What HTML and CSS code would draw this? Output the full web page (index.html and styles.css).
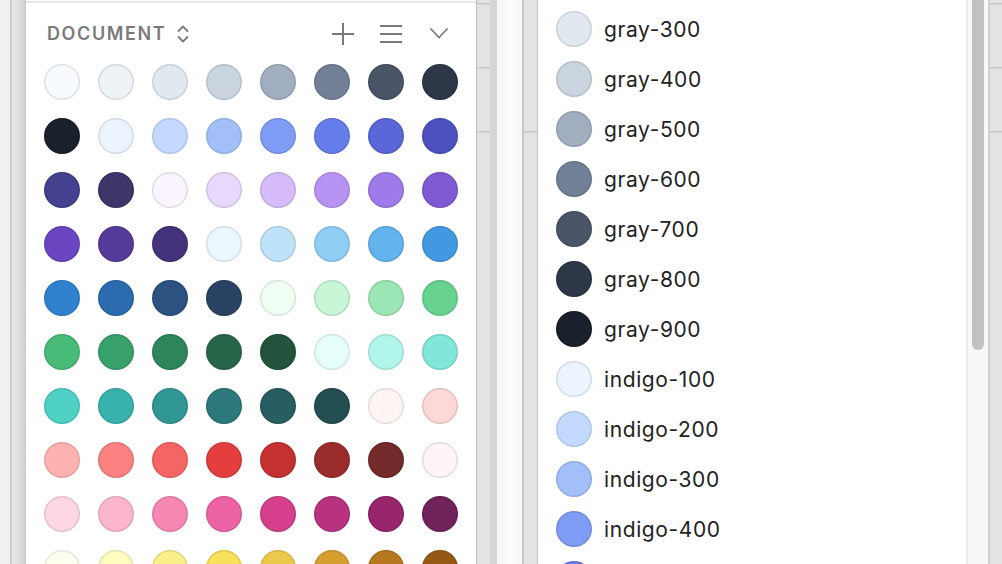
FILE: index.html
```html
<!DOCTYPE html>
<html lang="en">
<head>
<meta charset="utf-8">
<title>Colors</title>
<link rel="stylesheet" href="styles.css">
</head>
<body>
<div class="frame">
  <div class="edge-light"></div>
  <div class="edge-rule"></div>
  <div class="edge-shade"></div>

  <section class="panel panel-doc">
    <header class="doc-header">
      <div class="doc-title">
        <span class="doc-label">DOCUMENT</span>
        <svg class="icon-sort" width="14" height="20" viewBox="0 0 14 20" fill="none" stroke="currentColor" stroke-width="1.8" stroke-linecap="round" stroke-linejoin="round"><path d="M2.5 7 L7 2.5 L11.5 7"/><path d="M2.5 13 L7 17.5 L11.5 13"/></svg>
      </div>
      <div class="doc-actions">
        <svg class="icon" width="24" height="24" viewBox="0 0 24 24" fill="none" stroke="currentColor" stroke-width="2"><path d="M12 1 V23"/><path d="M1 12 H23"/></svg>
        <svg class="icon" width="24" height="24" viewBox="0 0 24 24" fill="none" stroke="currentColor" stroke-width="2"><path d="M1 4 H23"/><path d="M1 12 H23"/><path d="M1 20 H23"/></svg>
        <svg class="icon" width="24" height="24" viewBox="0 0 24 24" fill="none" stroke="currentColor" stroke-width="1.8" stroke-linecap="round" stroke-linejoin="round"><path d="M4 7 L12 15.5 L20 7"/></svg>
      </div>
    </header>
    <div class="swatch-grid">
      <span class="swatch" style="background:#f7fafc"></span>
      <span class="swatch" style="background:#edf2f7"></span>
      <span class="swatch" style="background:#e2e8f0"></span>
      <span class="swatch" style="background:#cbd5e0"></span>
      <span class="swatch" style="background:#a0aec0"></span>
      <span class="swatch" style="background:#718096"></span>
      <span class="swatch" style="background:#4a5568"></span>
      <span class="swatch" style="background:#2d3748"></span>

      <span class="swatch" style="background:#1a202c"></span>
      <span class="swatch" style="background:#ebf4ff"></span>
      <span class="swatch" style="background:#c3dafe"></span>
      <span class="swatch" style="background:#a3bffa"></span>
      <span class="swatch" style="background:#7f9cf5"></span>
      <span class="swatch" style="background:#667eea"></span>
      <span class="swatch" style="background:#5a67d8"></span>
      <span class="swatch" style="background:#4c51bf"></span>

      <span class="swatch" style="background:#434190"></span>
      <span class="swatch" style="background:#3c366b"></span>
      <span class="swatch" style="background:#faf5ff"></span>
      <span class="swatch" style="background:#e9d8fd"></span>
      <span class="swatch" style="background:#d6bcfa"></span>
      <span class="swatch" style="background:#b794f4"></span>
      <span class="swatch" style="background:#9f7aea"></span>
      <span class="swatch" style="background:#805ad5"></span>

      <span class="swatch" style="background:#6b46c1"></span>
      <span class="swatch" style="background:#553c9a"></span>
      <span class="swatch" style="background:#44337a"></span>
      <span class="swatch" style="background:#ebf8ff"></span>
      <span class="swatch" style="background:#bee3f8"></span>
      <span class="swatch" style="background:#90cdf4"></span>
      <span class="swatch" style="background:#63b3ed"></span>
      <span class="swatch" style="background:#4299e1"></span>

      <span class="swatch" style="background:#3182ce"></span>
      <span class="swatch" style="background:#2b6cb0"></span>
      <span class="swatch" style="background:#2c5282"></span>
      <span class="swatch" style="background:#2a4365"></span>
      <span class="swatch" style="background:#f0fff4"></span>
      <span class="swatch" style="background:#c6f6d5"></span>
      <span class="swatch" style="background:#9ae6b4"></span>
      <span class="swatch" style="background:#68d391"></span>

      <span class="swatch" style="background:#48bb78"></span>
      <span class="swatch" style="background:#38a169"></span>
      <span class="swatch" style="background:#2f855a"></span>
      <span class="swatch" style="background:#276749"></span>
      <span class="swatch" style="background:#22543d"></span>
      <span class="swatch" style="background:#e6fffa"></span>
      <span class="swatch" style="background:#b2f5ea"></span>
      <span class="swatch" style="background:#81e6d9"></span>

      <span class="swatch" style="background:#4fd1c5"></span>
      <span class="swatch" style="background:#38b2ac"></span>
      <span class="swatch" style="background:#319795"></span>
      <span class="swatch" style="background:#2c7a7b"></span>
      <span class="swatch" style="background:#285e61"></span>
      <span class="swatch" style="background:#234e52"></span>
      <span class="swatch" style="background:#fff5f5"></span>
      <span class="swatch" style="background:#fed7d7"></span>

      <span class="swatch" style="background:#feb2b2"></span>
      <span class="swatch" style="background:#fc8181"></span>
      <span class="swatch" style="background:#f56565"></span>
      <span class="swatch" style="background:#e53e3e"></span>
      <span class="swatch" style="background:#c53030"></span>
      <span class="swatch" style="background:#9b2c2c"></span>
      <span class="swatch" style="background:#742a2a"></span>
      <span class="swatch" style="background:#fff5f7"></span>

      <span class="swatch" style="background:#fed7e2"></span>
      <span class="swatch" style="background:#fbb6ce"></span>
      <span class="swatch" style="background:#f687b3"></span>
      <span class="swatch" style="background:#ed64a6"></span>
      <span class="swatch" style="background:#d53f8c"></span>
      <span class="swatch" style="background:#b83280"></span>
      <span class="swatch" style="background:#97266d"></span>
      <span class="swatch" style="background:#702459"></span>

      <span class="swatch" style="background:#fffff0"></span>
      <span class="swatch" style="background:#fefcbf"></span>
      <span class="swatch" style="background:#faf089"></span>
      <span class="swatch" style="background:#f6e05e"></span>
      <span class="swatch" style="background:#ecc94b"></span>
      <span class="swatch" style="background:#d69e2e"></span>
      <span class="swatch" style="background:#b7791f"></span>
      <span class="swatch" style="background:#975a16"></span>
    </div>
  </section>

  <div class="gap-border"></div>
  <div class="gap-stripe lines-a"></div>
  <div class="gap-dark"></div>
  <div class="gap-light"></div>
  <div class="gap-rule"></div>
  <div class="gap-stripe lines-b"></div>
  <div class="gap-edge"></div>

  <section class="panel panel-list">
    <ul class="color-list">
      <li class="color-item"><span class="swatch" style="background:#e2e8f0"></span><span class="color-name">gray-300</span></li>
      <li class="color-item"><span class="swatch" style="background:#cbd5e0"></span><span class="color-name">gray-400</span></li>
      <li class="color-item"><span class="swatch" style="background:#a0aec0"></span><span class="color-name">gray-500</span></li>
      <li class="color-item"><span class="swatch" style="background:#718096"></span><span class="color-name">gray-600</span></li>
      <li class="color-item"><span class="swatch" style="background:#4a5568"></span><span class="color-name">gray-700</span></li>
      <li class="color-item"><span class="swatch" style="background:#2d3748"></span><span class="color-name">gray-800</span></li>
      <li class="color-item"><span class="swatch" style="background:#1a202c"></span><span class="color-name">gray-900</span></li>
      <li class="color-item"><span class="swatch" style="background:#ebf4ff"></span><span class="color-name">indigo-100</span></li>
      <li class="color-item"><span class="swatch" style="background:#c3dafe"></span><span class="color-name">indigo-200</span></li>
      <li class="color-item"><span class="swatch" style="background:#a3bffa"></span><span class="color-name">indigo-300</span></li>
      <li class="color-item"><span class="swatch" style="background:#7f9cf5"></span><span class="color-name">indigo-400</span></li>
      <li class="color-item"><span class="swatch" style="background:#667eea"></span><span class="color-name">indigo-500</span></li>
    </ul>
  </section>

  <div class="scroll-border"></div>
  <div class="scroll-track"><div class="scroll-thumb"></div></div>
  <div class="scroll-rule"></div>
  <div class="gap-stripe lines-a right-stripe"></div>
</div>
</body>
</html>
```

FILE: styles.css
```css
* { box-sizing: border-box; }

html, body {
  margin: 0;
  padding: 0;
  height: 100%;
}

body {
  background: #e4e4e4;
  font-family: Inter, "Noto Sans", "Liberation Sans", sans-serif;
  overflow: hidden;
}

.frame {
  display: flex;
  height: 564px;
  width: 1002px;
  overflow: hidden;
}

.frame > * { flex: none; height: 100%; }

.edge-light { width: 10px; background: #f1f1f1; }
.edge-rule { width: 2px; background: #cdcdcd; }
.edge-shade { width: 14px; background: linear-gradient(to right, #e9e9e9, #d9d9d9 70%, #c9c9c9); }

.panel {
  background: #ffffff;
  overflow: hidden;
}

.panel-doc {
  width: 450px;
  padding: 3px 18px 0 18px;
  box-shadow: inset 0 1px 0 #ffffff, inset 0 3px 0 #e7e7e7;
}

.doc-header {
  height: 61px;
  display: flex;
  align-items: center;
  justify-content: space-between;
  color: #7a7a7a;
}

.doc-title {
  display: flex;
  align-items: center;
  gap: 10px;
  padding-left: 3px;
}

.doc-label {
  font-size: 18px;
  font-weight: 600;
  letter-spacing: 1.6px;
  line-height: 1;
}

.icon-sort { display: block; }

.doc-actions {
  display: flex;
  align-items: center;
  gap: 24px;
  padding-right: 7px;
}

.icon { display: block; }

.swatch-grid {
  display: grid;
  grid-template-columns: repeat(8, 36px);
  grid-auto-rows: 36px;
  column-gap: 18px;
  row-gap: 18px;
}

.swatch {
  display: block;
  width: 36px;
  height: 36px;
  border-radius: 50%;
  box-shadow: inset 0 0 0 1.5px rgba(0, 0, 0, 0.1);
  flex: none;
}

.gap-border { width: 1px; background: #bdbdbd; }
.gap-stripe { width: 13px; background-color: #e3e3e3; }
.lines-a {
  background-image:
    linear-gradient(#c9c9c9, #c9c9c9),
    linear-gradient(#c9c9c9, #c9c9c9),
    linear-gradient(#c9c9c9, #c9c9c9);
  background-repeat: no-repeat;
  background-size: 100% 1.5px;
  background-position: 0 3px, 0 67px, 0 131px;
}
.lines-b {
  background-image: linear-gradient(#c9c9c9, #c9c9c9);
  background-repeat: no-repeat;
  background-size: 100% 1.5px;
  background-position: 0 131px;
}
.gap-dark { width: 7px; background: #d6d6d6; }
.gap-light { width: 25px; background: linear-gradient(to right, #f5f5f5, #fbfbfb 50%, #f6f6f6); }
.gap-rule { width: 2px; background: #c7c7c7; }
.gap-edge { width: 1px; background: #c4c4c4; }

.panel-list {
  width: 428px;
  padding: 4px 18px 0 18px;
}

.color-list {
  list-style: none;
  margin: 0;
  padding: 0;
}

.color-item {
  height: 50px;
  display: flex;
  align-items: center;
  gap: 12px;
}

.color-name {
  font-size: 21px;
  letter-spacing: 0.6px;
  color: #222222;
  line-height: 1;
}

.scroll-border { width: 2px; background: #ebebeb; }
.scroll-track {
  width: 20px;
  background: #f8f8f8;
  padding: 0 4px;
}
.scroll-thumb {
  height: 350px;
  background: #c1c1c1;
  border-radius: 0 0 6px 6px;
}
.scroll-rule { width: 2px; background: #d2d2d2; }
.right-stripe { width: 12px; }
```
